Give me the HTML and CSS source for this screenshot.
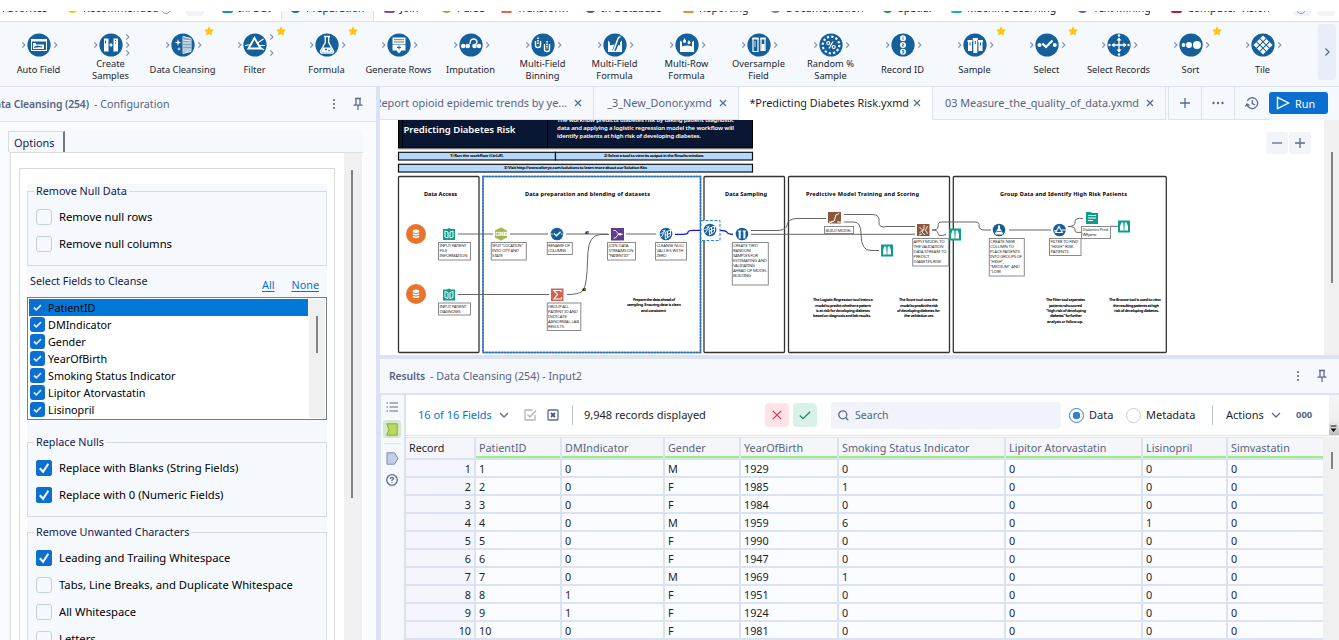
FILE: index.html
```
<!DOCTYPE html>
<html lang="en">
<head>
<meta charset="utf-8">
<title>Predicting Diabetes Risk</title>
<link rel="stylesheet" href="styles.css">
</head>
<body>
<svg class="defs" width="0" height="0" aria-hidden="true">
  <defs>
    <path id="in" class="chev" d="M19.3 15.3l2.6 2.7-2.6 2.7"/>
    <path id="out" class="chev" d="M51.3 15.3l2.6 2.7-2.6 2.7"/>
    <circle id="disc" cx="36" cy="18" r="11.6" fill="#155f9b"/>
    <path id="star" fill="#fdc60b" d="M62-.8l1.5 3.1 3.4.5-2.4 2.4.5 3.4-3-1.6-3 1.6.5-3.4-2.4-2.4 3.4-.5z"/>
    <symbol id="pin" viewBox="0 0 12 14"><path class="ln" d="M3 1.5h6M4 1.5v6.3M8 1.5v6.3M1.5 8.2h9M6 8.2v4.8"/></symbol>
    <symbol id="more" viewBox="0 0 4 12"><g fill="#5b6b8f"><circle cx="2" cy="2" r="1.1"/><circle cx="2" cy="6" r="1.1"/><circle cx="2" cy="10" r="1.1"/></g></symbol>
    <symbol id="x" viewBox="0 0 8 8"><path class="ln" d="M1 1l6 6M7 1L1 7"/></symbol>
    <symbol id="down" viewBox="0 0 10 8"><path class="ln" d="M1 2l4 4 4-4"/></symbol>
    <symbol id="tick" viewBox="0 0 16 16"><path fill="none" stroke="#fff" stroke-width="2" d="M3.8 8.2l3.3 3.6 5.2-8"/></symbol>
    <symbol id="stick" viewBox="0 0 16 16"><path fill="none" stroke="#d5e8fb" stroke-width="1.9" d="M4.2 8l2.5 2.5 5-5"/></symbol>
    <g id="book"><path fill="#0b9e8a" d="M0 1h4l2-1 2 1h4v11H0z"/><path fill="none" stroke="#fff" d="M2 3l3 1v6L2 9zM7 4l3-1v6l-3 1z"/></g>
    <g id="binoc"><rect width="12" height="12" fill="#0b9e8a"/><path fill="#fff" d="M3.3 2h1.9l.5 8H2V6zM8.7 2H6.8l-.5 8H10V6z"/></g>
    <g id="db"><circle r="10" fill="#e9732b"/><path fill="#fff" d="M-3.2-3.4Q0-5.4 3.2-3.4v1.6Q0-.2-3.2-1.8zM-3.2-.8Q0 .8 3.2-.8v1.5Q0 2.3-3.2.7zM-3.2 1.7Q0 3.3 3.2 1.7v1.5Q0 5.2-3.2 3.2z"/></g>
    <g id="cleanse"><circle r="6.3" fill="#155f9b"/><path fill="none" stroke="#fff" stroke-width="1" d="M-1-1.500l5.500-2.500v5.500L-.5 5zM1.500-2.700v6.700M-.8 1.500l5.300-2.500M-5.500-.5l3-.8 1.500-3M-4.500 3l2-3.500M-3.500-3.500l2 1"/></g>
  </defs>
</svg>

<div class="cats">
  <span class="cat">Favorites</span>
  <span class="cat"><i class="ci sun"></i>Recommended<i class="ring"></i></span>
  <span class="cat"><i class="pill"></i></span>
  <span class="cat"><i class="ci teal"></i>In/Out</span>
  <span class="cat on"><i class="ci blue rd"></i>Preparation</span>
  <span class="cat"><i class="ci violet"></i>Join</span>
  <span class="cat"><i class="ci lime rd"></i>Parse</span>
  <span class="cat"><i class="ci red"></i>Transform</span>
  <span class="cat"><i class="ci navy rd"></i>In-Database</span>
  <span class="cat"><i class="ci amber"></i>Reporting</span>
  <span class="cat"><i class="ci slate rd"></i>Documentation</span>
  <span class="cat"><i class="ci green rd"></i>Spatial</span>
  <span class="cat"><i class="ci cyan"></i>Machine Learning</span>
  <span class="cat"><i class="ci indigo rd"></i>Text Mining</span>
  <span class="cat"><i class="ci crimson"></i>Computer Vision</span>
  <span class="cat"><i class="pill"><i class="ring"></i></i></span>
  <span class="cat"><i class="pill dot"></i></span>
</div>

<div class="tools">
  <div class="tool"><svg viewBox="0 0 72 32"><use href="#in"/><use href="#out"/><use href="#disc"/><rect x="28.500" y="12.500" width="15" height="11" fill="none" stroke="#fff"/><path fill="#fff" d="M28 12h16v2.500H28zM30 16h3v1.500h8V22H30z"/><path stroke="#155f9b" d="M31 20.500l3-1.500 5 1"/></svg><span>Auto Field</span></div>
  <div class="tool"><svg viewBox="0 0 72 32"><use href="#in"/><use href="#out" y="-8"/><use href="#out"/><use href="#out" y="8"/><use href="#disc"/><path fill="#fff" d="M29 11.500h4.500v13H29zM38.500 11.500H43v13h-4.500zM34.500 17.300h3v1.400h-3z"/><path stroke="#fff" d="M36 16v4"/><path stroke="#155f9b" d="M30.500 13.500v3M40 13.500h1M40 16h1"/></svg><span>Create<br>Samples</span></div>
  <div class="tool"><svg viewBox="0 0 72 32"><use href="#in"/><use href="#out"/><use href="#disc"/><use href="#star"/><path fill="none" stroke="#fff" stroke-width=".9" d="M36 9.500l8 2v13l-8 2zM38 10v16M40 10.500v15M42 11v14M36 13l8 1M36 16h8M36 19h8M36 22h8M36 24h8"/><path fill="#fff" d="M31 12l.8 2.700 2.700.8-2.700.8L31 19l-.8-2.700-2.700-.8 2.700-.8zM32 20l.5 1.500 1.500.5-1.500.5L32 24l-.5-1.500L30 22l1.500-.5z"/></svg><span>Data Cleansing</span></div>
  <div class="tool"><svg viewBox="0 0 72 32"><use href="#in"/><use href="#out" y="-8"/><use href="#out" y="8"/><use href="#disc"/><use href="#star"/><path fill="none" stroke="#fff" stroke-width="1.900" d="M35.500 11l6 10.500H29.500z"/><path stroke="#fff" stroke-width="1.200" d="M26 18.500l7-1M38.500 16l6-4M39 18.500h7M40 19.500l5 3.500"/></svg><span>Filter</span></div>
  <div class="tool"><svg viewBox="0 0 72 32"><use href="#in"/><use href="#out"/><use href="#disc"/><use href="#star"/><path fill="none" stroke="#fff" stroke-width="1.300" d="M33 9.500h6M34.300 10v5.500L29.500 24q-.5 2 1.500 2h10q2 0 1.500-2l-4.800-8.500V10"/><path fill="#fff" d="M32 20.500h8l2 4.500H30z"/><circle cx="35" cy="22.500" r="1" fill="#155f9b"/><circle cx="38" cy="23.500" r=".8" fill="#155f9b"/></svg><span>Formula</span></div>
  <div class="tool"><svg viewBox="0 0 72 32"><use href="#in"/><use href="#out"/><use href="#disc"/><path fill="#fff" d="M29.500 10.500h13v7h-13zM29.500 18h13v5.500h-4L36 26.500l-2.500-3h-4z"/><path stroke="#155f9b" stroke-width=".8" d="M31 12.700h10M31 15h10"/><path stroke="#155f9b" d="M36 18.500v4M34 20.500h4"/></svg><span>Generate Rows</span></div>
  <div class="tool"><svg viewBox="0 0 72 32"><use href="#in"/><use href="#out"/><use href="#disc"/><g fill="#fff"><circle cx="28.200" cy="19" r="2.300"/><circle cx="32.800" cy="19" r="2.300"/><circle cx="39.500" cy="19" r="2.300"/><circle cx="44" cy="19" r="2.300"/></g><path fill="none" stroke="#fff" stroke-width="1.300" d="M35 17q0-5 3.500-5t3.500 3.500l-1.500 2"/></svg><span>Imputation</span></div>
  <div class="tool"><svg viewBox="0 0 72 32"><use href="#in"/><use href="#out"/><use href="#disc"/><path fill="none" stroke="#fff" stroke-width="1.400" d="M28.500 14v4.500q0 2 2.500 2t2.500-2V14M37.500 17v5.500q0 2 2.500 2t2.500-2V17"/><path stroke="#fff" stroke-width="1.600" stroke-dasharray="1.600 .9" d="M31 10.500v7.500M40 14v8"/></svg><span>Multi-Field<br>Binning</span></div>
  <div class="tool"><svg viewBox="0 0 72 32"><use href="#in"/><use href="#out"/><use href="#disc"/><path fill="#fff" d="M29 13.500l2 2v3q5-2 10 0v-3l2-2V25H29z"/><path stroke="#155f9b" stroke-width="3.600" d="M35 23.500l5-12"/><path fill="none" stroke="#fff" stroke-width="1.500" d="M34.500 24l4.500-12.500q.8-2 2.500-1.500"/></svg><span>Multi-Field<br>Formula</span></div>
  <div class="tool"><svg viewBox="0 0 72 32"><use href="#in"/><use href="#out"/><use href="#disc"/><path fill="#fff" d="M29 13.500l2 1.500v4.500q5-2 10 0V15l2-1.500V25H29z"/><path fill="#fff" d="M33.500 11l1.600 3q.2 2-1.600 2t-1.600-2zM38 13l1.500 2.500q.2 1.800-1.500 1.800t-1.500-1.800z"/></svg><span>Multi-Row<br>Formula</span></div>
  <div class="tool"><svg viewBox="0 0 72 32"><use href="#in"/><use href="#out"/><use href="#disc"/><path fill="none" stroke="#fff" stroke-width="1.200" d="M30 11.500h5v13h-5zM38 11.500h4v12h-4z"/><path fill="#fff" d="M29.400 10.500h6.200v2h-6.200zM37.400 10.500h5.200v2h-5.200zM38.500 17h3v6h-3z"/><path stroke="#fff" stroke-width=".8" d="M31 15h2M31 17h2M31 19h2"/></svg><span>Oversample<br>Field</span></div>
  <div class="tool"><svg viewBox="0 0 72 32"><use href="#in"/><use href="#out"/><use href="#disc"/><circle cx="36" cy="18" r="8.300" fill="none" stroke="#fff" stroke-width="2.200" stroke-dasharray="2.200 2.150"/><path stroke="#fff" stroke-width="1.200" d="M34 21.500l4-7"/><g fill="none" stroke="#fff" stroke-width="1.200"><circle cx="33.300" cy="16" r="1.500"/><circle cx="38.700" cy="20" r="1.500"/></g></svg><span>Random %<br>Sample</span></div>
  <div class="tool"><svg viewBox="0 0 72 32"><use href="#in"/><use href="#out"/><use href="#disc"/><g fill="#fff"><circle cx="36" cy="11.300" r="3"/><circle cx="36" cy="18" r="3"/><circle cx="36" cy="24.700" r="3"/></g><path fill="none" stroke="#155f9b" stroke-width=".8" d="M36 9.700v3.200M35 17h2l-2 2h2M35 23.500h1.800v2.500H35M35.500 24.700h1"/></svg><span>Record ID</span></div>
  <div class="tool"><svg viewBox="0 0 72 32"><use href="#in"/><use href="#out"/><use href="#disc"/><use href="#star"/><path fill="#fff" d="M28.500 13h5v2h-.5v9h-4v-9h-.5zM33.800 11h5v2h-.5v13h-4V13h-.5zM39 13h5v2h-.5v9h-4v-9h-.5z"/><path stroke="#155f9b" d="M31 15.500v3M36.300 14v3M41.500 15.500v3"/></svg><span>Sample</span></div>
  <div class="tool"><svg viewBox="0 0 72 32"><use href="#in"/><use href="#out"/><use href="#disc"/><use href="#star"/><circle cx="28.500" cy="18" r="2" fill="#fff"/><circle cx="43.800" cy="18" r="2" fill="#fff"/><path fill="none" stroke="#fff" stroke-width="2.300" d="M31.300 16.500l3.700 3.500 6.500-6.500"/></svg><span>Select</span></div>
  <div class="tool"><svg viewBox="0 0 72 32"><use href="#in"/><use href="#out"/><use href="#disc"/><path stroke="#fff" stroke-width="1.300" d="M36 11v14M29 18h14"/><path fill="#fff" d="M33.500 13.500h5L36 10.500zM33.500 22.500h5l-2.500 3zM31.500 15.500v5l-3-2.500zM40.500 15.500v5l3-2.500z"/><g fill="#fff"><circle cx="36" cy="8.500" r="1.200"/><circle cx="36" cy="27.500" r="1.200"/><circle cx="26.500" cy="18" r="1.200"/><circle cx="45.500" cy="18" r="1.200"/></g></svg><span>Select Records</span></div>
  <div class="tool"><svg viewBox="0 0 72 32"><use href="#in"/><use href="#out"/><use href="#disc"/><use href="#star"/><g fill="#fff"><circle cx="28.500" cy="18" r="1.900"/><circle cx="34" cy="18" r="3"/><circle cx="42" cy="18" r="4"/></g></svg><span>Sort</span></div>
  <div class="tool"><svg viewBox="0 0 72 32"><use href="#in"/><use href="#out"/><use href="#disc"/><path fill="#fff" d="M36 8.500l9.500 9.500-9.500 9.500L26.500 18z"/><path stroke="#155f9b" stroke-width="1.100" d="M32.800 11.700l9.500 9.500M29.700 14.800l9.500 9.500M39.200 11.700l-9.500 9.500M42.300 14.800l-9.500 9.500"/></svg><span>Tile</span></div>
  <div class="next"><svg width="8" height="10" viewBox="0 0 8 10"><path class="ln" d="M2.500 1.500L6 5 2.500 8.500"/></svg></div>
</div>

<div class="main">
  <aside class="config">
    <div class="phead"><b class="clipb">Data Cleansing (254)</b><span class="sub">- Configuration</span><i class="grow"></i><svg width="4" height="12"><use href="#more"/></svg><svg class="pinl" width="12" height="14"><use href="#pin"/></svg></div>
    <div class="cbody">
      <div class="otab">Options</div>
      <div class="opane">
        <div class="sheet"><div class="form">
          <section class="group g1"><h4>Remove Null Data</h4>
            <label><i class="cb"></i>Remove null rows</label>
            <label><i class="cb"></i>Remove null columns</label>
          </section>
          <div class="selrow"><span>Select Fields to Cleanse</span><a>All</a><a>None</a></div>
          <div class="list">
            <ul>
              <li class="sel"><svg class="sc" viewBox="0 0 16 16"><use href="#stick"/></svg>PatientID</li>
              <li><svg class="sc" viewBox="0 0 16 16"><use href="#stick"/></svg>DMIndicator</li>
              <li><svg class="sc" viewBox="0 0 16 16"><use href="#stick"/></svg>Gender</li>
              <li><svg class="sc" viewBox="0 0 16 16"><use href="#stick"/></svg>YearOfBirth</li>
              <li><svg class="sc" viewBox="0 0 16 16"><use href="#stick"/></svg>Smoking Status Indicator</li>
              <li><svg class="sc" viewBox="0 0 16 16"><use href="#stick"/></svg>Lipitor Atorvastatin</li>
              <li><svg class="sc" viewBox="0 0 16 16"><use href="#stick"/></svg>Lisinopril</li>
            </ul>
            <div class="lbar"><i></i></div>
          </div>
          <section class="group g2"><h4>Replace Nulls</h4>
            <label><i class="cb ck"><svg viewBox="0 0 16 16"><use href="#tick"/></svg></i>Replace with Blanks (String Fields)</label>
            <label><i class="cb ck"><svg viewBox="0 0 16 16"><use href="#tick"/></svg></i>Replace with 0 (Numeric Fields)</label>
          </section>
          <section class="group g3"><h4>Remove Unwanted Characters</h4>
            <label><i class="cb ck"><svg viewBox="0 0 16 16"><use href="#tick"/></svg></i>Leading and Trailing Whitespace</label>
            <label><i class="cb"></i>Tabs, Line Breaks, and Duplicate Whitespace</label>
            <label><i class="cb"></i>All Whitespace</label>
            <label><i class="cb"></i>Letters</label>
          </section>
        </div></div>
        <div class="vbar"><i></i></div>
      </div>
    </div>
  </aside>

  <div class="work">
    <div class="tabs">
      <div class="tab t1"><span>Report opioid epidemic trends by ye...</span><svg width="8" height="8"><use href="#x"/></svg></div>
      <div class="tab t2"><span>_3_New_Donor.yxmd</span><svg width="8" height="8"><use href="#x"/></svg></div>
      <div class="tab t3"><span>*Predicting Diabetes Risk.yxmd</span><svg width="8" height="8"><use href="#x"/></svg></div>
      <div class="tab t4"><span>03 Measure_the_quality_of_data.yxmd</span><svg width="8" height="8"><use href="#x"/></svg></div>
      <div class="tab tb"><svg width="12" height="12" viewBox="0 0 12 12"><path class="ln" d="M6 1v10M1 6h10"/></svg></div>
      <div class="tab tb"><svg width="12" height="4" viewBox="0 0 12 4" fill="#5b6b8f"><circle cx="1.500" cy="2" r="1.200"/><circle cx="6" cy="2" r="1.200"/><circle cx="10.500" cy="2" r="1.200"/></svg></div>
      <div class="tab hist"><svg width="14" height="14" viewBox="0 0 14 14"><path class="ln" d="M2.300 5A5.400 5.400 0 1 1 2 8.500M.5 10.500L2 8l2.500 1.500M7.300 4v3.500l2.700 1.300"/></svg></div>
      <button class="run"><svg width="14" height="14" viewBox="0 0 14 14"><path fill="none" stroke="#fff" stroke-width="1.400" d="M1.500 1.300L12.500 7l-11 5.700z"/></svg>Run</button>
    </div>
    <div class="stage">
      <svg class="flow" viewBox="380 120 944 235" width="944" height="235">
        <rect x="398.500" y="112" width="354" height="36" fill="#0a1733" stroke="#000"/>
        <path stroke="#000" d="M402.500 120v28M547.500 120v28"/><path stroke="#777" d="M398 148.800h355"/>
        <text class="ttl" x="403.500" y="133" textLength="112">Predicting Diabetes Risk</text>
        <g class="desc"><text x="557" y="121.500" textLength="177">The workflow predicts diabetes risk by taking patient diagnostic</text><text x="557" y="129.800" textLength="177">data and applying a logistic regression model the workflow will</text><text x="557" y="138.300" textLength="144">identify patients at high risk of developing diabetes.</text></g>
        <g fill="#b5d8fd" stroke="#111" stroke-width="1.200"><rect x="398.500" y="152.300" width="157" height="7.700"/><rect x="555.500" y="152.300" width="197" height="7.700"/><rect x="398.500" y="164.300" width="354" height="7.700"/></g>
        <g class="hint"><text x="450" y="157.300" textLength="54">1) Run the workflow (Ctrl+R).</text><text x="604" y="157.300" textLength="100">2) Select a tool to view its output in the Results window.</text><text x="504" y="169.300" textLength="143">3) Visit http://www.alteryx.com/solutions to learn more about our Solution Kits</text></g>
        <g fill="#fff" stroke="#333" stroke-width="1.300"><rect x="398.500" y="176.500" width="80.500" height="176" rx="1"/><rect x="704" y="176.500" width="80.500" height="176" rx="1"/><rect x="788.500" y="176.500" width="161" height="176" rx="1"/><rect x="953.300" y="176.500" width="213" height="176" rx="1"/></g>
        <rect x="483" y="176.500" width="217.500" height="176" fill="#fff" stroke="#6b7480" stroke-width="1.500"/><rect x="483" y="176.500" width="217.500" height="176" fill="none" stroke="#1b78cf" stroke-width="1.500" stroke-dasharray="2 1"/>
        <g class="hd"><text x="424" y="196" textLength="33">Data Access</text><text x="525" y="196" textLength="125">Data preparation and blending of datasets</text><text x="725" y="196" textLength="42">Data Sampling</text><text x="806" y="196" textLength="113">Predictive Model Training and Scoring</text><text x="1000" y="196" textLength="127">Group Data and Identify High  Risk Patients</text></g>
        <g class="wire"><path d="M458 234h35M510 234h38M566 234h42M626 234h30M458 294.500h91M567 294.500q11 0 15-3 4-3 5-20l1-20q1-16 12-17h9M751 230.500h26q8 0 10-5 1-7 10-7h29M751 234.300h164M844 214.500h28q8 0 7 7t8 5h28M844 222h10q7 0 7 12 0 17 10 16.500h8M932 230q6 0 6-3 0-5 3-5h34q5 0 4 4 0 4 6 4h6M932 230q6 0 6 3.500t8 1M1009 230h42M1068 226.500q8 0 7-5 0-4 8-3M1068 226.500q8 0 7 3.500t8 2M1110 226.300h8"/></g>
        <path fill="none" stroke="#1414e6" stroke-width="1.300" d="M675 234.300h8q5 0 5-2t5-2h7M720 230.300q6 0 7 2t6 2"/>
        <use href="#db" x="416" y="234"/><use href="#db" x="416" y="294"/>
        <use href="#book" x="443" y="228"/><use href="#book" x="443" y="288.500"/>
        <path fill="#a2b552" d="M501 227.500l6 3v7l-6 3-6-3v-7z"/><path fill="none" stroke="#fff" stroke-width=".9" d="M496 232.300h5v3h-5zM502 232.300h5v3h-5zM504.500 232v4M498 234h8"/>
        <circle cx="557" cy="234" r="6.300" fill="#155f9b"/><path fill="none" stroke="#fff" stroke-width="1.300" d="M551.500 234h1M554 233.500l2.500 2.300 4-4M561.500 234h1"/>
        <rect x="551" y="288.500" width="12.500" height="12.500" fill="#d2624f"/><path fill="none" stroke="#fff" stroke-width="1.200" d="M561 292v-1.500h-7l3.500 4-3.500 4.500h7.500v-2"/>
        <rect x="611" y="228" width="13" height="12.500" fill="#5f3d8c"/><path fill="none" stroke="#fff" stroke-width=".9" d="M613.500 230.500h2l3 3.500-3 4h-2M618 234.200h5"/><circle cx="620" cy="234.200" r="1.300" fill="#fff"/>
        <use href="#cleanse" x="666" y="234"/>
        <rect x="701" y="220.500" width="19" height="20" fill="#fff" stroke="#2a86d1" stroke-dasharray="3 1.500"/><use href="#cleanse" x="710" y="230"/>
        <circle cx="742" cy="234" r="6.300" fill="#155f9b"/><path fill="#fff" d="M738 230.500h3.300v1h-.6v7h-2v-7h-.7zM742.700 230.500h3.300v1h-.6v7h-2v-7h-.7z"/>
        <rect x="828" y="212" width="13" height="11.500" fill="#8c573d"/><path fill="none" stroke="#fff" d="M829 222h3q3 0 3-4t4-4.500M828 224l5-3M837 222h4"/>
        <rect x="917" y="224" width="12.500" height="12" fill="#8c573d"/><path fill="none" stroke="#fff" stroke-width=".9" d="M919.500 227l3 3-3 3M924 225v4l-2 3 3 3M927.500 226l-2 4 2 4M919 235l3-1"/>
        <use href="#binoc" x="881" y="244.500"/><use href="#binoc" x="949" y="228.500"/><use href="#binoc" x="1118" y="220.500"/>
        <circle cx="999" cy="230" r="6.300" fill="#155f9b"/><path fill="#fff" d="M998 225.500h2v2.700l3 5.300q0 1-1 1h-6q-1 0-1-1l3-5.300z"/><path stroke="#155f9b" stroke-width=".8" d="M996.500 231.500h5"/>
        <circle cx="1059.500" cy="230" r="6.300" fill="#155f9b"/><path fill="none" stroke="#fff" stroke-width="1.100" d="M1059 226.500l3.300 6h-6.600zM1054 231l3-.5M1062 230h4"/>
        <path fill="#0b9e8a" d="M1086 212h5l1 1h6v11h-12z"/><path stroke="#fff" d="M1088 215.500h8M1088 218h8M1088 220.500h5"/>
        <g class="box"><rect x="438.500" y="242.500" width="32" height="17.500"/><rect x="438.500" y="303" width="32" height="12"/><rect x="491.300" y="242.500" width="35" height="17.500"/><rect x="547.300" y="242.500" width="25" height="12"/><rect x="547.300" y="303" width="33.500" height="27.500"/><rect x="607.500" y="242.500" width="28" height="17.500"/><rect x="655.500" y="242.500" width="31" height="17.500"/><rect x="732.300" y="242.500" width="36" height="42.500"/><rect x="824.500" y="226.500" width="29" height="7"/><rect x="912.700" y="238.500" width="36" height="27.500"/><rect x="989.300" y="238.500" width="35" height="37.500"/><rect x="1049.500" y="238.500" width="31.500" height="17"/><rect x="1081.500" y="226.500" width="29" height="12"/></g>
        <g class="note">
          <text x="439.500" y="247" textLength="27">INPUT PATIENT</text><text x="439.500" y="252" textLength="8">FILE</text><text x="439.500" y="257" textLength="28">INFORMATION</text>
          <text x="439.500" y="307.500" textLength="27">INPUT PATIENT</text><text x="439.500" y="312.500" textLength="21">DIAGNOSES</text>
          <text x="492" y="247" textLength="31">SPLIT "LOCATION"</text><text x="492" y="252" textLength="27">INTO CITY AND</text><text x="492" y="257" textLength="11">STATE</text>
          <text x="548" y="247" textLength="22">RENAME OF</text><text x="548" y="252" textLength="18">COLUMNS</text>
          <text x="548" y="307.500" textLength="21">GROUP ALL</text><text x="548" y="312.500" textLength="30">PATIENT ID AND</text><text x="548" y="317.500" textLength="19">INDICATE</text><text x="548" y="322.500" textLength="31">ABNORMAL LAB</text><text x="548" y="327.500" textLength="16">RESULTS</text>
          <text x="608.500" y="247" textLength="20">JOIN DATA</text><text x="608.500" y="252" textLength="25">STREAMS ON</text><text x="608.500" y="257" textLength="21">"PATIENT ID"</text>
          <text x="656.500" y="247" textLength="28">CLEANSE NULL</text><text x="656.500" y="252" textLength="27">VALUES WITH</text><text x="656.500" y="257" textLength="10">ZERO</text>
          <text x="733" y="247" textLength="25">CREATE TWO</text><text x="733" y="252" textLength="18">RANDOM</text><text x="733" y="257" textLength="25">SAMPLES FOR</text><text x="733" y="262" textLength="34">ESTIMATING AND</text><text x="733" y="267" textLength="22">VALIDATING</text><text x="733" y="272" textLength="34">AHEAD OF MODEL</text><text x="733" y="277" textLength="18">BUILDING</text>
          <text x="825.500" y="231.500" textLength="26">BUILD MODEL</text>
          <text x="913.500" y="243" textLength="31">APPLY MODEL TO</text><text x="913.500" y="248" textLength="30">THE VALIDATION</text><text x="913.500" y="253" textLength="33">DATA STREAM TO</text><text x="913.500" y="258" textLength="16">PREDICT</text><text x="913.500" y="263" textLength="28">DIABETES RISK</text>
          <text x="990" y="243" textLength="25">CREATE NEW</text><text x="990" y="248" textLength="24">COLUMN TO</text><text x="990" y="253" textLength="30">PLACE PATIENTS</text><text x="990" y="258" textLength="32">INTO GROUPS OF</text><text x="990" y="263" textLength="14">"HIGH",</text><text x="990" y="268" textLength="30">"MEDIUM" AND</text><text x="990" y="273" textLength="11">"LOW</text>
          <text x="1050.500" y="243" textLength="28">FILTER TO FIND</text><text x="1050.500" y="248" textLength="23">"HIGH" RISK</text><text x="1050.500" y="253" textLength="18">PATIENTS</text>
          <text x="1082.500" y="231" textLength="26">Diabetes Pred</text><text x="1082.500" y="236" textLength="14">WF.yxmc</text>
        </g>
        <g class="tip">
          <text x="633" y="301" textLength="42">Prepare the data ahead of</text><text x="627" y="306.300" textLength="54">sampling. Ensuring data is clean</text><text x="641" y="311.600" textLength="25">and consistent</text>
          <text x="813" y="301" textLength="60">The Logistic Regression tool trains a</text><text x="815" y="306.500" textLength="56">model to predict whether a patient</text><text x="816" y="312" textLength="54">is at risk for developing diabetes</text><text x="813" y="317.300" textLength="58">based on diagnosis and lab results.</text>
          <text x="899" y="301" textLength="39">The Score tool uses the</text><text x="900" y="306.500" textLength="38">model to predict the risk</text><text x="897" y="312" textLength="43">of developing diabetes for</text><text x="904" y="317.300" textLength="30">the validation set.</text>
          <text x="1046" y="301" textLength="39">The Filter tool separates</text><text x="1049" y="306.500" textLength="33">patients who scored</text><text x="1046" y="312" textLength="40">"high risk of developing</text><text x="1050" y="317.300" textLength="32">diabetes" for further</text><text x="1047" y="322.500" textLength="36">analysis or follow-up.</text>
          <text x="1109" y="301" textLength="52">The Browse tool is used to view</text><text x="1113" y="306.500" textLength="46">the resulting patients at high</text><text x="1114" y="312" textLength="45">risk of developing diabetes.</text>
          <text x="585" y="234" textLength="4">#1</text><text x="582" y="291" textLength="4">#2</text>
        </g>
      </svg>
      <div class="zoomer"><span><svg width="12" height="12" viewBox="0 0 12 12"><path class="ln" d="M1 6h10"/></svg></span><span><svg width="12" height="12" viewBox="0 0 12 12"><path class="ln" d="M1 6h10M6 1v10"/></svg></span></div>
      <div class="sbar"><i></i></div>
    </div>

    <div class="results">
      <div class="phead rh"><b>Results</b><span class="sub">- Data Cleansing (254) - Input2</span><i class="grow"></i><svg width="4" height="12"><use href="#more"/></svg><svg class="pinl" width="12" height="14"><use href="#pin"/></svg></div>
      <div class="rbody">
        <div class="rail">
          <svg width="12" height="10" viewBox="0 0 12 10"><path stroke="#5b6b8f" stroke-width="1.200" d="M3.500 1H12M3.500 5H12M3.500 9H12M.5 1H2M.5 5H2M.5 9H2"/></svg>
          <i class="green-btn"><svg width="12" height="13" viewBox="0 0 12 13"><path fill="#b9da5f" stroke="#7fae30" d="M.8.800h10.400v11.400H.8l2.200-5.700z"/></svg></i>
          <hr>
          <svg width="13" height="13" viewBox="0 0 13 13"><path fill="#c3cfe6" stroke="#7d8db5" d="M1 .8h7.500L12 6.500 8.500 12.200H1z"/></svg>
          <svg class="help" width="12" height="12" viewBox="0 0 12 12"><circle class="ln" cx="6" cy="6" r="5.300"/><path class="ln" d="M4.500 4.700q0-1.400 1.500-1.400t1.500 1.300Q7.500 5.500 6 6v1M6 8v1.100"/></svg>
        </div>
        <div class="rmain">
          <div class="rtool">
            <span class="fields">16 of 16 Fields</span><svg class="dn" width="10" height="8"><use href="#down"/></svg>
            <svg class="i1" width="13" height="12" viewBox="0 0 13 12"><path fill="none" stroke="#b5b5b5" stroke-width="1.300" d="M8.500 1H1v10h10V6M3.500 5.500L6 8l6-6.500"/></svg>
            <svg class="i2" width="12" height="12" viewBox="0 0 12 12"><rect class="ln" x="1" y="1" width="10" height="10" rx="1"/><path stroke="#4a5b80" stroke-width="1.800" d="M4 4l4 4M8 4L4 8"/></svg>
            <i class="vsep"></i><span class="count">9,948 records displayed</span><i class="grow"></i>
            <span class="sq no"><svg width="10" height="10" viewBox="0 0 10 10"><path stroke="#d8344a" stroke-width="1.200" d="M.8.800l8.400 8.400M9.200.800L.8 9.200"/></svg></span>
            <span class="sq yes"><svg width="12" height="9" viewBox="0 0 12 9"><path fill="none" stroke="#0c8a6c" stroke-width="1.300" d="M.8 4.500L4 7.700 11.200.800"/></svg></span>
            <span class="search"><svg width="11" height="11" viewBox="0 0 11 11"><circle class="ln" cx="4.800" cy="4.800" r="4"/><path class="ln" d="M7.800 7.800L10.300 10.300"/></svg>Search</span>
            <i class="radio ron"></i><span class="rd1">Data</span><i class="radio"></i><span class="rd2">Metadata</span><i class="vsep v2"></i><span class="act">Actions</span><svg class="dn2" width="10" height="8"><use href="#down"/></svg><b class="ooo">000</b><i class="ovf"><svg width="7" height="8" viewBox="0 0 7 8"><path fill="#111" d="M.5.500h6v1h-6zM.5 3.500h6L3.500 7z"/></svg></i>
          </div>
          <div class="gridwrap">
            <div class="grid">
              <b class="rec">Record</b><b>PatientID</b><b>DMIndicator</b><b>Gender</b><b>YearOfBirth</b><b>Smoking Status Indicator</b><b>Lipitor Atorvastatin</b><b>Lisinopril</b><b>Simvastatin</b>
              <u>1</u><s>1</s><s>0</s><s>M</s><s>1929</s><s>0</s><s>0</s><s>0</s><s>0</s>
              <u>2</u><s>2</s><s>0</s><s>F</s><s>1985</s><s>1</s><s>0</s><s>0</s><s>0</s>
              <u>3</u><s>3</s><s>0</s><s>F</s><s>1984</s><s>0</s><s>0</s><s>0</s><s>0</s>
              <u>4</u><s>4</s><s>0</s><s>M</s><s>1959</s><s>6</s><s>0</s><s>1</s><s>0</s>
              <u>5</u><s>5</s><s>0</s><s>F</s><s>1990</s><s>0</s><s>0</s><s>0</s><s>0</s>
              <u>6</u><s>6</s><s>0</s><s>F</s><s>1947</s><s>0</s><s>0</s><s>0</s><s>0</s>
              <u>7</u><s>7</s><s>0</s><s>M</s><s>1969</s><s>1</s><s>0</s><s>0</s><s>0</s>
              <u>8</u><s>8</s><s>1</s><s>F</s><s>1951</s><s>0</s><s>0</s><s>0</s><s>0</s>
              <u>9</u><s>9</s><s>1</s><s>F</s><s>1924</s><s>0</s><s>0</s><s>0</s><s>0</s>
              <u>10</u><s>10</s><s>0</s><s>F</s><s>1981</s><s>0</s><s>0</s><s>0</s><s>0</s>
            </div>
            <div class="gbar"><i></i></div>
          </div>
        </div>
      </div>
    </div>
  </div>
</div>
</body>
</html>
```
FILE: styles.css
```
* { box-sizing: border-box; }
body { margin: 0; width: 1339px; height: 640px; overflow: hidden; background: #fff; font: 10.8px/14px "Noto Sans", "Open Sans", sans-serif; color: #1b1f2e; display: flex; flex-direction: column; }
.defs { position: absolute; }
svg { display: block; flex: none; }
i { font-style: normal; display: block; }
.grow { flex: 1; }
.ln { fill: none; stroke: #5b6b8f; stroke-width: 1.3; }
.chev { fill: none; stroke: #7c8cae; stroke-width: 1.1; }

/* category strip, scrolled so only its lower edge shows */
.cats { height: 11px; margin-top: 11px; flex: none; overflow: hidden; border-bottom: 1px solid #dbe3f0; display: grid; grid-template-columns: 65px 115px 40px 61px 93px 65px 60px 84px 98px 87px 112px 69px 126px 94px 124px 24px 22px; align-items: start; }
.cat { margin-top: -10px; height: 20px; display: flex; align-items: flex-start; padding-left: 2px; white-space: nowrap; line-height: 14px; font-size: 10.6px; }
.cat.on { background: #f5f8fd; padding-left: 8px; border: 1px solid #dbe3f0; border-width: 0 1px; height: 21px; }
.ci { width: 11px; height: 12px; margin: 0 5px 0 0; border-radius: 2px; }
.cat.on + .cat { padding-left: 10px; }
.rd { border-radius: 6px; }
.sun { background: #fdc60b; border-radius: 5px; }
.teal { background: #0b9e8a; } .blue { background: #0f6cb6; } .violet { background: #7d4fa8; } .lime { background: #8db33a; }
.red { background: #e8604c; } .navy { background: #45598a; } .amber { background: #e58e35; } .slate { background: #75849f; }
.green { background: #159a3e; } .cyan { background: #0bb3d0; } .indigo { background: #5763d6; } .crimson { background: #b3203d; }
.ring { width: 10px; height: 10px; border: 1px solid #8c9abb; border-radius: 5px; margin: 3px 0 0 3px; }
.pill { width: 18px; height: 15px; background: #f0f3fa; border-radius: 0 0 4px 4px; margin-left: 4px; }
.cat:nth-last-child(-n+2) .pill { margin-left: -2px; }

.tools { height: 65px; flex: none; background: #f5f8fd; border-bottom: 1px solid #dbe3f0; display: flex; padding-left: 3px; }
.tool { width: 72px; padding-top: 5px; }
.tool svg { width: 72px; height: 32px; overflow: visible; }
.tool span { display: flex; align-items: center; justify-content: center; text-align: center; height: 24px; margin-top: -1px; padding-right: 1px; font-size: 9.3px; line-height: 12px; white-space: nowrap; }
.next { margin: 2px 0 0 19px; width: 18px; height: 56px; border-radius: 3px; background: #e8edf7; display: flex; align-items: center; justify-content: center; }

.main { flex: 1; display: flex; min-height: 0; }
.config { width: 380px; border-right: 4px solid #dbe3f0; display: flex; flex-direction: column; background: #fafbfe; }
.phead { height: 35px; flex: none; display: flex; align-items: center; background: #f5f8fd; border-bottom: 1px solid #dbe3f0; color: #56647f; font-size: 10.7px; padding-right: 12px; white-space: nowrap; }
.phead b { font-weight: 600; font-size: 10.4px; letter-spacing: -.1px; }
.clipb { width: 89px; display: flex; justify-content: flex-end; overflow: hidden; }
.sub { margin-left: 5px; }
.pinl { margin-left: 16px; }
.cbody { margin: 8px 13px 0 8px; background: #f5f8fd; flex: 1; min-height: 0; display: flex; flex-direction: column; }
.otab { width: 57px; height: 21px; margin-top: 1px; border: 1px solid #ddd; border-right: 2px solid #777; border-bottom: 0; padding: 4px 0 0 5px; font-size: 10.9px; color: #14204a; }
.opane { flex: 1; min-height: 0; margin-left: 2px; border: 1px solid #ddd; border-width: 1px 0 0 1px; background: #fff; display: flex; overflow: hidden; }
.sheet { margin: 15px 9px 0 8px; width: 316px; border: 1px solid #d9d9d9; border-bottom: 0; padding: 15px 7px 0; flex: none; }
.form { background: #f5f8fd; height: 480px; padding-top: 7px; }
.vbar { width: 18px; background: #f0f0f0; padding: 17px 0 0 7px; }
.vbar i { width: 2px; height: 328px; background: #838383; }
.group { border: 1px solid #d9dadd; padding: 0 0 0 8px; color: #000; font-size: 11.25px; }
.group h4 { margin: -8px 0 0 -2px; width: max-content; background: #f5f8fd; padding: 0 2px; font-weight: 400; font-size: 10.8px; line-height: 14px; color: #14204a; }
.g1, .g2 { height: 75px; }
.g3 { height: 140px; }
.group label { display: flex; align-items: center; height: 16px; margin-top: 11px; }
.group h4 + label { margin-top: 11px; }
.cb { width: 16px; height: 16px; border: 1px solid #c3cde4; border-radius: 3px; margin-right: 7px; }
.cb svg { width: 16px; height: 16px; margin: -1px; }
.ck { background: #0b6fd0; border-color: #0b6fd0; border-radius: 2px; }
.selrow { height: 31px; display: flex; padding: 8px 8px 0 3px; color: #14204a; align-items: flex-start; }
.selrow span { flex: 1; }
.selrow a { color: #0b6fd0; margin: 4px 0 0 17px; text-decoration: underline; text-underline-offset: 2px; }
.list { height: 123px; border: 1px solid #767b8a; background: #fff; display: flex; justify-content: space-between; padding: 1px; }
.list ul { list-style: none; margin: 0; padding: 0; width: 279px; font-size: 10.8px; color: #000; }
.list li { height: 17px; display: flex; align-items: center; padding-left: 1px; line-height: 17px; }
.sel { background: #0078d7; }
.sc { width: 15px; height: 15px; background: #0b6fd0; border-radius: 3px; margin-right: 3px; }
.lbar { width: 16px; background: #f0f0f0; padding: 17px 0 0 7px; }
.lbar i { width: 2px; height: 37px; background: #838383; }
.g2 { margin-top: 22px; }
.g3 { margin-top: 15px; }

.work { flex: 1; min-width: 0; display: flex; flex-direction: column; }
.tabs { height: 33px; flex: none; display: flex; background: #f5f8fd; }
.tab { display: flex; align-items: center; justify-content: flex-end; border-right: 1px solid #dbe3f0; border-bottom: 1px solid #dbe3f0; color: #56647f; font-size: 10.85px; white-space: nowrap; overflow: hidden; }
.tab span { margin-right: 7px; }
.t1 { width: 214px; padding-right: 11px; }
.t2 { width: 145px; padding-right: 11px; }
.t3 { width: 194px; padding-right: 11px; background: #fff; border-bottom-color: #fff; color: #1b1f2e; }
.tab.t3 span { margin-right: 4px; }
.t4 { width: 233px; padding-right: 11px; margin-right: 2px; }
.t4 + .tab { border-left: 1px solid #dbe3f0; width: 34px; }
.tb { width: 33px; justify-content: center; }
.hist { border-right: 0; width: 34px; justify-content: center; }
.run { border: 0; margin: 5px 0 0; width: 59px; height: 22px; border-radius: 3px; background: #0b6fd0; color: #fff; font: 10.8px "Noto Sans", sans-serif; display: flex; align-items: center; padding: 0 0 0 7px; gap: 5px; }
.stage { height: 235px; flex: none; position: relative; display: flex; background: #fff; }
.sbar { width: 15px; background: #f0f0f0; padding: 32px 0 0 7px; }
.sbar i { width: 2px; height: 131px; background: #838383; }
.zoomer { position: absolute; left: 886px; top: 12px; display: flex; gap: 1px; }
.zoomer span { width: 22px; height: 22px; background: #f2f4fa; border-radius: 3px; display: flex; align-items: center; justify-content: center; }

.flow text { font-family: "Noto Sans", sans-serif; }
.ttl { font-size: 9.6px; font-weight: 600; fill: #fff; }
.desc { font-size: 6px; font-weight: 600; fill: #fff; }
.hint { font-size: 4.2px; font-weight: 700; fill: #000; }
.hd { font-size: 5.6px; font-weight: 700; fill: #000; }
.note { font-size: 4.3px; fill: #333; }
.tip { font-size: 4px; font-weight: 700; fill: #000; }
.wire path { fill: none; stroke: #666; }
.box rect { fill: #fff; stroke: #8a8a8a; }

.results { flex: 1; min-height: 0; display: flex; flex-direction: column; border-top: 4px solid #dbe3f0; }
.rh { height: 36px; padding-left: 9px; border-bottom-width: 2px; padding-right: 11px; }
.rbody { flex: 1; display: flex; min-height: 0; }
.rail { width: 26px; background: #f5f8fd; border-right: 2px solid #dbe3f0; border-left: 1px solid #dbe3f0; display: flex; flex-direction: column; align-items: center; padding: 7px 1px 0 0; }
.green-btn { width: 18px; height: 18px; border-radius: 3px; background: #d5e8cf; display: flex; align-items: center; justify-content: center; margin-top: 8px; }
.rail hr { width: 17px; border: 0; border-top: 1px solid #dbe3f0; margin: 5px 0 8px; }
.help { margin-top: 9px; }
.rmain { flex: 1; min-width: 0; display: flex; flex-direction: column; }
.rtool { height: 40px; flex: none; display: flex; align-items: center; padding-left: 12px; white-space: nowrap; font-size: 11px; }
.fields { color: #0b6fd0; width: 81px; }
.dn { margin-right: 15px; }
.i1 { margin-right: 10px; }
.vsep { width: 1px; height: 20px; background: #b9c4da; margin: 0 11px 0 13px; }
.sq { width: 24px; height: 24px; border-radius: 4px; display: flex; align-items: center; justify-content: center; }
.no { background: #ffe3e6; margin-right: 4px; }
.yes { background: #daf1ea; margin-right: 14px; }
.search { width: 230px; height: 27px; background: #f0f3f9; border-radius: 4px; display: flex; align-items: center; padding-left: 7px; gap: 6px; color: #56647f; font-size: 10.6px; margin-right: 8px; }
.radio { width: 15px; height: 15px; border-radius: 50%; border: 1.5px solid #ccc; flex: none; }
.ron { border-color: #2b82d8; background: radial-gradient(circle, #2b82d8 0 3.500px, #fff 4px); }
.rd1 { width: 37px; margin-left: 5px; }
.rd2 { width: 49px; margin-left: 5px; }
.v2 { margin: 0 13px 0 17px; }
.act { width: 38px; }
.dn2 { margin: 0 15px 0 7px; }
.ooo { color: #56647f; font-size: 9.5px; width: 18px; }
.ovf { width: 10px; height: 40px; margin-left: 15px; background: linear-gradient(#f5f5f5, #eee 65%, #bbb); display: flex; align-items: flex-end; padding: 0 0 2px 1px; }
.gridwrap { display: flex; border-top: 1px solid #dbe3f0; padding-top: 1px; flex: 1; min-height: 0; }
.grid { width: 917px; background: #dbe3f2; border-top: 1px solid #dbe3f0; display: grid; grid-template-columns: 68px 84px 101px 74px 96px 165px 135px 83px 95px; grid-template-rows: 20px repeat(10, 16px); gap: 2px; align-content: start; }
.grid > * { text-decoration: none; font-weight: 400; padding-left: 3px; line-height: 17px; background: #fafcff; white-space: nowrap; overflow: hidden; color: #1b1f2e; }
.grid b { background: #f5f6fc; color: #56647f; line-height: 20px; border-bottom: 2px solid #98f07c; }
.grid .rec { border-bottom: 0; color: #1b1f2e; }
.grid u { text-align: right; padding-right: 3px; background: #f5f6fc; }
.gbar { width: 16px; background: #f0f0f0; padding: 15px 0 0 8px; }
.gbar i { width: 2px; height: 17px; background: #838383; }
```
